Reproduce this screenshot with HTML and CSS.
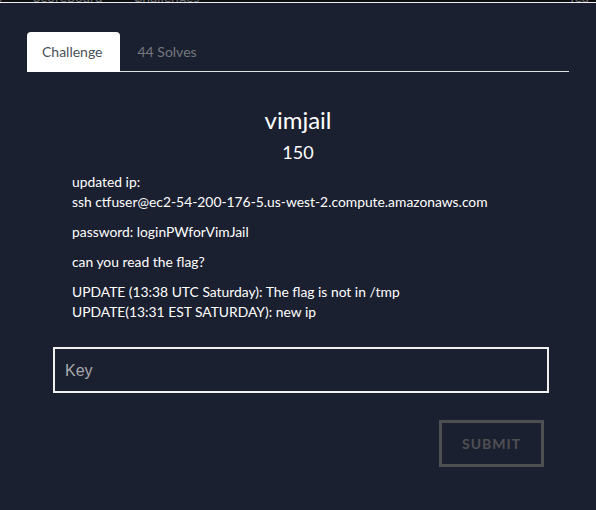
FILE: index.html
```html
<!DOCTYPE html>
<html>
<head>
<meta charset="utf-8">
<link rel="stylesheet" href="styles.css">
</head>
<body>
<div class="topstrip">
  <div class="topnav">
    <span class="nav-a">s</span>
    <span class="nav-b">Scoreboard</span>
    <span class="nav-c">Challenges</span>
    <span class="nav-d">Tea</span>
  </div>
</div>
<div class="modal">
  <ul class="tabs">
    <li class="tab active">Challenge</li>
    <li class="tab">44 Solves</li>
  </ul>
  <h2 class="title">vimjail</h2>
  <h3 class="value">150</h3>
  <div class="desc">
    <p>updated ip:<br>ssh ctfuser@ec2-54-200-176-5.us-west-2.compute.amazonaws.com</p>
    <p>password: loginPWforVimJail</p>
    <p>can you read the flag?</p>
    <p>UPDATE (13:38 UTC Saturday): The flag is not in /tmp<br>UPDATE(13:31 EST SATURDAY): new ip</p>
  </div>
  <div class="form">
    <input class="key" type="text" placeholder="Key">
    <div class="actions">
      <button class="submit">SUBMIT</button>
    </div>
  </div>
</div>
</body>
</html>
```
FILE: styles.css
```css
html, body {
  margin: 0;
  padding: 0;
  background: #1b2030;
  width: 596px;
  height: 510px;
  overflow: hidden;
  font-family: Lato, "Liberation Sans", sans-serif;
}
.topstrip {
  height: 2px;
  background: #0c0d10;
  border-bottom: 1px solid #f2f2f2;
  overflow: hidden;
  position: relative;
}
.topnav {
  display: flex;
  margin-top: -10px;
  font-size: 14px;
  line-height: 14px;
  color: #6b6e75;
}
.nav-a { margin-left: -4px; width: 37px; }
.nav-b { width: 100px; }
.nav-c { width: 435px; }
.modal {
  padding: 29px 27px 0 27px;
  width: 542px;
}
.tabs {
  list-style: none;
  margin: 0;
  padding: 0;
  display: flex;
  border-bottom: 1px solid #dee2e6;
}
.tab {
  padding: 8px 17px 8px 18px;
  line-height: 24px;
  font-size: 14px;
  color: #75787e;
  margin-bottom: -1px;
}
.tab.active {
  background: #fff;
  color: #495057;
  border-radius: 4px 4px 0 0;
  padding-left: 15px;
}
.title {
  text-align: center;
  color: #fff;
  font-weight: 400;
  font-size: 24px;
  line-height: 29px;
  margin: 33px 0 0 0;
}
.value {
  text-align: center;
  color: #fff;
  font-weight: 400;
  font-size: 18px;
  line-height: 22px;
  margin: 7px 0 0 0;
}
.desc {
  margin: 9px 0 0 45px;
  color: #fff;
  font-size: 13.85px;
  line-height: 20px;
}
.desc p {
  margin: 0 0 10px 0;
}
.form {
  margin: 25px 20px 0 26px;
}
.key {
  display: block;
  box-sizing: border-box;
  width: 496px;
  height: 46px;
  background: #1b2030;
  border: 2px solid #f0f0f0;
  padding: 2px 10px 0 10px;
  font-family: "Liberation Sans", Arial, sans-serif;
  font-size: 16px;
  color: #fff;
  outline: none;
}
.key::placeholder {
  color: #a9a9ad;
}
.actions {
  display: flex;
  justify-content: flex-end;
  margin-top: 27px;
  padding-right: 5px;
}
.submit {
  box-sizing: border-box;
  width: 105px;
  height: 47px;
  background: transparent;
  border: 3px solid #4e4f52;
  color: #4e4f52;
  font-family: Lato, sans-serif;
  font-weight: 700;
  font-size: 14px;
  letter-spacing: 1px;
}
```
